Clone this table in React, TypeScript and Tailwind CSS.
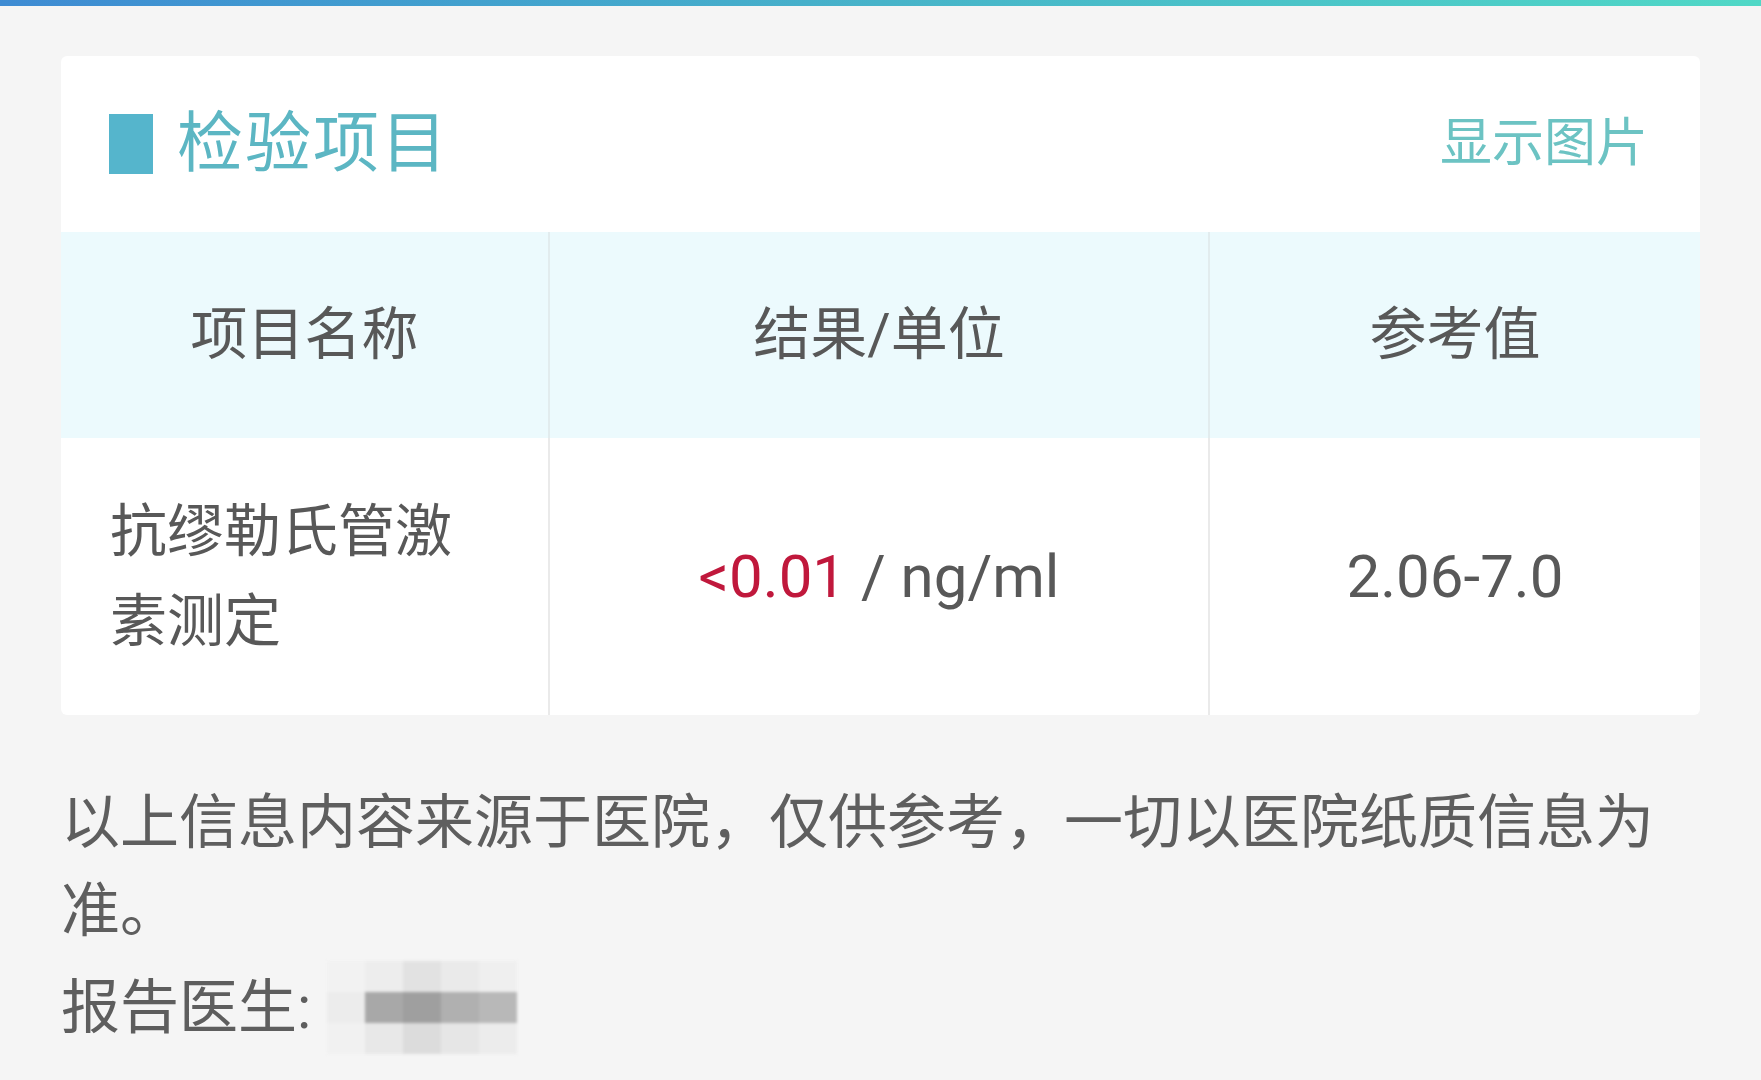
import React from 'react';

const cjk = { fontFamily: 'Roboto, "Noto Sans CJK SC", "Noto Sans", sans-serif' };

// pixelated name mosaic, grey values per block
const mosaic = [
  ['#f2f2f2', '#ededed', '#e2e2e2', '#eaeaea', '#efefef'],
  ['#ececec', '#a8a8a8', '#9f9f9f', '#b0b0b0', '#b8b8b8'],
  ['#f1f1f1', '#e8e8e8', '#dcdcdc', '#e6e6e6', '#ececec'],
];

function NameMosaic() {
  return (
    <div className="ml-[16px] flex flex-col blur-[1.5px]">
      {mosaic.map((row, i) => (
        <div key={i} className="flex">
          {row.map((c, j) => (
            <div key={j} className="w-[38px] h-[31px]" style={{ backgroundColor: c }} />
          ))}
        </div>
      ))}
    </div>
  );
}

export default function App() {
  return (
    <div className="min-h-screen w-full bg-[#f5f5f5]" style={cjk}>
      <div className="h-[6px] w-full bg-linear-to-r from-[#3e8bd3] via-[#47b3c9] to-[#50d8c6]" />

      <div className="px-[61px] pt-[50px]">
        {/* card */}
        <div className="bg-white rounded-[6px] overflow-hidden">
          <div className="h-[176px] flex items-center justify-between pl-[48px] pr-[52px]">
            <div className="flex items-center gap-[24px]">
              <div className="w-[44px] h-[60px] bg-[#55b5cc]" />
              <span className="text-[66px] leading-none text-[#5cb6c3] tracking-[2px]">检验项目</span>
            </div>
            <span className="text-[52px] leading-none text-[#6cc3c3]">显示图片</span>
          </div>

          <div className="grid grid-cols-[489px_660px_1fr] h-[206px] bg-[#ecfafd] text-[57px] text-[#585858]">
            <div className="flex items-center justify-center border-r-2 border-[#e2ecee]">项目名称</div>
            <div className="flex items-center justify-center border-r-2 border-[#e2ecee]">结果/单位</div>
            <div className="flex items-center justify-center">参考值</div>
          </div>

          <div className="grid grid-cols-[489px_660px_1fr] h-[277px] text-[#585858]">
            <div className="flex items-center pl-[49px] pr-[50px] border-r-2 border-[#eaeaea]">
              <span className="text-[57px] leading-[90px]">抗缪勒氏管激素测定</span>
            </div>
            <div className="flex items-center justify-center border-r-2 border-[#eaeaea] text-[60px]">
              <span className="text-[#c0183c]">&lt;0.01</span>
              <span className="whitespace-pre"> / ng/ml</span>
            </div>
            <div className="flex items-center justify-center text-[60px]">2.06-7.0</div>
          </div>
        </div>

        {/* footer note */}
        <div className="mt-[64px] text-[59px] leading-[88px] text-[#5e5e5e]">
          <p>以上信息内容来源于医院，仅供参考，一切以医院纸质信息为准。</p>
          <div className="mt-[6px] flex items-center">
            <span>报告医生:</span>
            <NameMosaic />
          </div>
        </div>
      </div>
    </div>
  );
}
